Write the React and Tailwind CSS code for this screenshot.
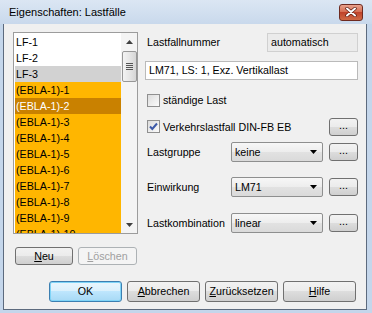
import React from 'react';

const items = [
  { label: 'LF-1', tone: 'plain' },
  { label: 'LF-2', tone: 'plain' },
  { label: 'LF-3', tone: 'gray' },
  { label: '(EBLA-1)-1', tone: 'orange' },
  { label: '(EBLA-1)-2', tone: 'selected' },
  { label: '(EBLA-1)-3', tone: 'orange' },
  { label: '(EBLA-1)-4', tone: 'orange' },
  { label: '(EBLA-1)-5', tone: 'orange' },
  { label: '(EBLA-1)-6', tone: 'orange' },
  { label: '(EBLA-1)-7', tone: 'orange' },
  { label: '(EBLA-1)-8', tone: 'orange' },
  { label: '(EBLA-1)-9', tone: 'orange' },
  { label: '(EBLA-1)-10', tone: 'orange' },
];

const toneClass = {
  plain: 'bg-white text-black',
  gray: 'bg-[#d2d2d2] text-black',
  orange: 'bg-[#ffb600] text-black',
  selected: 'bg-[#c98100] text-white',
};

function Button({ children, className = '', disabled = false, primary = false }) {
  const look = primary
    ? 'border-[#3c7fb1] bg-[linear-gradient(#eaf6fd,#d9f0fc_50%,#bee6fd_50%,#a7d9f5)] shadow-[inset_0_0_0_1px_#7fd4f7]'
    : disabled
    ? 'border-[#adb2b5] bg-[#f4f4f4] text-[#a0a0a0]'
    : 'border-[#707070] bg-[linear-gradient(#f2f2f2,#ebebeb_50%,#dddddd_50%,#cfcfcf)]';
  return (
    <div className={`flex items-center justify-center rounded-[3px] border ${look} ${className}`}>
      {children}
    </div>
  );
}

function Combo({ value }) {
  return (
    <div className="flex h-[20px] w-[92px] items-center justify-between rounded-[2px] border border-[#8e8f8f] bg-[linear-gradient(#f7f7f7,#ededed_50%,#e2e2e2_50%,#dadada)] pl-[3px] pr-[5px]">
      <span>{value}</span>
      <svg width="7" height="4" viewBox="0 0 7 4">
        <path d="M0 0 H7 L3.5 4 Z" fill="#000" />
      </svg>
    </div>
  );
}

function Checkbox({ checked }) {
  return (
    <div className="flex h-[13px] w-[13px] items-center justify-center border border-[#8f8f8f] bg-[linear-gradient(135deg,#dcdcdc,#fbfbfb)]">
      {checked && (
        <svg width="11" height="11" viewBox="0 0 11 11">
          <path d="M2 5.5 L4.3 8 L9 2.5" fill="none" stroke="#3d5aa8" strokeWidth="2" />
        </svg>
      )}
    </div>
  );
}

function Dots() {
  return <Button className="h-[18px] w-[29px] pb-[3px]">...</Button>;
}

export default function App() {
  return (
    <div className="flex h-[313px] w-[372px] flex-col overflow-hidden bg-[#c4d6eb] font-['Liberation_Sans',Arial,sans-serif] text-[10.7px] text-black">
      {/* title bar */}
      <div className="flex h-[24px] items-center justify-between bg-[linear-gradient(#dbe6f3,#c9d9ec)] pl-[9px] pr-[9px] text-[11px]">
        <span>Eigenschaften: Lastfälle</span>
        <div className="flex h-[17px] w-[24px] items-center justify-center rounded-[3px] border border-[#6e2a20] bg-[linear-gradient(#e8a18c,#d46a4e_50%,#c0432a_50%,#cf6a45)]">
          <svg width="12" height="10" viewBox="0 0 12 10">
            <path d="M2 1.5 L10 8.5 M10 1.5 L2 8.5" stroke="#5a1a10" strokeWidth="3.4" strokeLinecap="round" />
            <path d="M2 1.5 L10 8.5 M10 1.5 L2 8.5" stroke="#fff" strokeWidth="2" strokeLinecap="round" />
          </svg>
        </div>
      </div>

      {/* client area */}
      <div className="mb-[3px] ml-[3px] mr-[5px] flex flex-1 flex-col border border-t-0 border-[#5c6a7e] bg-[#f0f0f0] pl-[9px] pt-[8px]">
        <div className="flex gap-[7px]">
          {/* left column */}
          <div className="flex w-[125px] flex-col">
            <div className="flex h-[202px] border border-[#9c9c9c] bg-white">
              <div className="flex flex-1 flex-col overflow-hidden p-[1px] pr-0">
                {items.map((it) => (
                  <div key={it.label} className={`flex h-[16px] shrink-0 items-center pl-[1px] ${toneClass[it.tone]}`}>
                    {it.label}
                  </div>
                ))}
              </div>
              <div className="flex w-[16px] flex-col items-center bg-[#f4f4f4]">
                <div className="flex h-[17px] items-center justify-center">
                  <svg width="7" height="4" viewBox="0 0 7 4">
                    <path d="M0 4 H7 L3.5 0 Z" fill="#404040" />
                  </svg>
                </div>
                <div className="mt-[1px] flex h-[31px] w-[15px] flex-col items-center justify-center gap-[1px] rounded-[2px] border border-[#979797] bg-[linear-gradient(90deg,#f3f3f3,#e6e6e6_50%,#d6d6d6)]">
                  <div className="h-[1px] w-[7px] bg-[#555]" />
                  <div className="h-[1px] w-[7px] bg-[#555]" />
                  <div className="h-[1px] w-[7px] bg-[#555]" />
                  <div className="h-[1px] w-[7px] bg-[#555]" />
                </div>
                <div className="flex-1" />
                <div className="flex h-[17px] items-center justify-center">
                  <svg width="7" height="4" viewBox="0 0 7 4">
                    <path d="M0 0 H7 L3.5 4 Z" fill="#404040" />
                  </svg>
                </div>
              </div>
            </div>
            <div className="mt-[13px] flex gap-[5px] pl-[2px]">
              <Button className="h-[18px] w-[58px]">
                <span><span className="underline">N</span>eu</span>
              </Button>
              <Button disabled className="h-[18px] w-[59px]">
                <span><span className="underline">L</span>öschen</span>
              </Button>
            </div>
          </div>

          {/* right column */}
          <div className="flex w-[213px] flex-col">
            <div className="mt-[1px] flex h-[19px] items-center justify-between">
              <span className="pl-[2px]">Lastfallnummer</span>
              <div className="flex h-[19px] w-[91px] items-center border border-[#d0d0d0] bg-[#ebebeb] pl-[3px]">
                automatisch
              </div>
            </div>
            <div className="mt-[9px] flex h-[19px] items-center border border-[#bababa] bg-white pl-[3px]">
              LM71, LS: 1, Exz. Vertikallast
            </div>
            <div className="mt-[10px] flex h-[20px] items-center gap-[3px] pl-[2px]">
              <Checkbox />
              <span>ständige Last</span>
            </div>
            <div className="mt-[7px] flex h-[20px] items-center justify-between pl-[2px]">
              <div className="flex items-center gap-[3px]">
                <Checkbox checked />
                <span>Verkehrslastfall DIN-FB EB</span>
              </div>
              <Dots />
            </div>
            <div className="mt-[5px] flex h-[20px] items-center">
              <span className="w-[86px] pl-[2px]">Lastgruppe</span>
              <Combo value="keine" />
              <div className="ml-[6px]"><Dots /></div>
            </div>
            <div className="mt-[15px] flex h-[20px] items-center">
              <span className="w-[86px] pl-[2px]">Einwirkung</span>
              <Combo value="LM71" />
              <div className="ml-[6px]"><Dots /></div>
            </div>
            <div className="mt-[16px] flex h-[20px] items-center">
              <span className="w-[86px] pl-[2px]">Lastkombination</span>
              <Combo value="linear" />
              <div className="ml-[6px]"><Dots /></div>
            </div>
          </div>
        </div>

        {/* bottom buttons */}
        <div className="mt-[16px] flex justify-end gap-[5px] pr-[10px]">
          <Button primary className="h-[21px] w-[73px]">OK</Button>
          <Button className="h-[21px] w-[73px]">
            <span><span className="underline">A</span>bbrechen</span>
          </Button>
          <Button className="h-[21px] w-[73px]">
            <span><span className="underline">Z</span>urücksetzen</span>
          </Button>
          <Button className="h-[21px] w-[73px]">
            <span><span className="underline">H</span>ilfe</span>
          </Button>
        </div>
      </div>
    </div>
  );
}
